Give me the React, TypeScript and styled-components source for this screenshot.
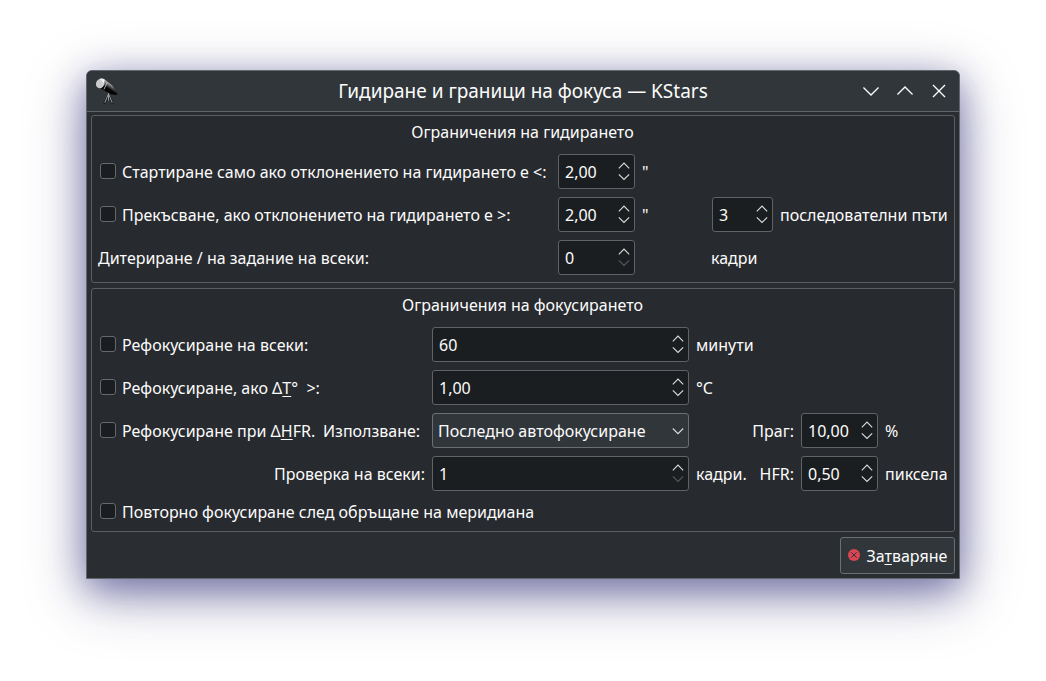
import React from "react";
import styled, { createGlobalStyle } from "styled-components";

const GlobalStyle = createGlobalStyle`
  * { box-sizing: border-box; }
  body {
    margin: 0;
    background: #fff;
    font: 16px/22px "Noto Sans", sans-serif;
    color: #fcfcfc;
    overflow: hidden;
  }
`;

const Desktop = styled.main`
  height: 681px;
  padding: 70px 86px 0;
`;

const Window = styled.section`
  width: 874px;
  height: 509px;
  display: flex;
  flex-direction: column;
  border: 1px solid #60686d;
  border-radius: 6px 6px 0 0;
  background: #2a2e32;
  box-shadow: 0 16px 60px rgba(33, 30, 95, 0.38), 0 10px 34px rgba(33, 32, 125, 0.44);
`;

const TitleBar = styled.header`
  height: 41px;
  display: grid;
  grid-template-columns: 90px 1fr 90px;
  align-items: center;
  padding: 0 12px 0 6px;
  border-bottom: 1px solid #60676b;
  border-radius: 5px 5px 0 0;
  background: #31363b;
`;

const Title = styled.h1`
  margin: 0;
  padding-left: 6px;
  text-align: center;
  font-size: 19px;
  font-weight: 400;
  line-height: 26px;
  white-space: nowrap;
`;

const WindowButtons = styled.div`
  display: flex;
  gap: 18px;
  justify-content: flex-end;
`;

const Body = styled.div`
  flex: 1;
  display: flex;
  flex-direction: column;
  gap: 5px;
  padding: 3px 4px 4px;
`;

const Group = styled.fieldset<{ $height: number }>`
  height: ${(p) => p.$height}px;
  margin: 0;
  padding: 5px 5px 0;
  min-width: 0;
  border: 1px solid #5b5f62;
  border-radius: 3px;
  background: #272a2e;
  display: flex;
  flex-direction: column;
`;

const GroupTitle = styled.div`
  height: 22px;
  margin-bottom: 11px;
  padding-right: 1px;
  text-align: center;
`;

const Row = styled.div<{ $height?: number }>`
  height: ${(p) => p.$height ?? 35}px;
  margin-bottom: 8px;
  display: flex;
  align-items: center;
  white-space: pre;
`;

const Label = styled.label<{ $width?: number; $indent?: number; $align?: string }>`
  width: ${(p) => (p.$width ? p.$width + "px" : "auto")};
  flex: none;
  display: flex;
  align-items: center;
  justify-content: ${(p) => p.$align ?? "flex-start"};
  padding-left: ${(p) => p.$indent ?? 0}px;
  white-space: pre;
`;

const CheckBox = styled.span`
  width: 16px;
  height: 16px;
  flex: none;
  margin: 0 6px 1px 3px;
  border: 1px solid #65696c;
  border-radius: 3px;
  background: #1b1e20;
`;

const Mnemonic = styled.span`
  text-decoration: underline;
  text-decoration-thickness: 1px;
  text-underline-offset: 2px;
  text-decoration-skip-ink: none;
`;

const Field = styled.div<{ $width: number; $raised?: boolean }>`
  width: ${(p) => p.$width}px;
  height: 35px;
  flex: none;
  display: flex;
  align-items: center;
  justify-content: space-between;
  padding: 0 2px 0 ${(p) => (p.$raised ? 5 : 6)}px;
  border: 1px solid ${(p) => (p.$raised ? "#6b6f73" : "#5f6366")};
  border-radius: 3px;
  background: ${(p) => (p.$raised ? "#31363b" : "#1b1e20")};
`;

const Footer = styled.footer`
  display: flex;
  justify-content: flex-end;
`;

const CloseButton = styled.button`
  width: 115px;
  height: 37px;
  display: flex;
  align-items: center;
  gap: 6.5px;
  padding: 0 0 0 7px;
  border: 1px solid #6b6f73;
  border-radius: 3px;
  background: #31363b;
  color: inherit;
  font: inherit;
`;

const CloseIcon = styled.svg`
  margin-bottom: 2px;
`;

function Arrows({ atMinimum }: { atMinimum?: boolean }) {
  return (
    <svg width="16" height="33" viewBox="0 0 16 33" fill="none" stroke="#dcdddd" strokeWidth="1.1">
      <path d="M2.8 13.3 8 8.1l5.2 5.2" />
      <path d="M2.8 19.3 8 24.5l5.2-5.2" stroke={atMinimum ? "#56595b" : undefined} />
    </svg>
  );
}

function Spin({ value, width, atMinimum }: { value: string; width: number; atMinimum?: boolean }) {
  return (
    <Field $width={width}>
      <span>{value}</span>
      <Arrows atMinimum={atMinimum} />
    </Field>
  );
}

function Telescope() {
  return (
    <svg width="26" height="28" viewBox="0 0 26 28">
      <defs>
        <linearGradient id="tube" gradientUnits="userSpaceOnUse" x1="17" y1="6" x2="12" y2="14">
          <stop offset="0" stopColor="#c4c6c6" />
          <stop offset="0.35" stopColor="#4a4a4a" />
          <stop offset="0.6" stopColor="#050505" />
        </linearGradient>
      </defs>
      <path d="m15.5 18-4.3 9M15.5 18l4.5 9" stroke="#1c2023" strokeWidth="2.4" fill="none" />
      <path d="m15.2 17.5-3.4 8.2M15.8 17.5l3.4 8.2M15.5 16v7.5" stroke="#a6a9ab" strokeWidth="0.9" fill="none" />
      <path d="m11 2 8.5 6.8 3 5.2 2.2 2.8-.8 1.2-5.4-.6L7.5 11.5z" fill="url(#tube)" />
      <ellipse cx="7.3" cy="6.4" rx="4.2" ry="5" transform="rotate(28 7.3 6.4)" fill="#c9cbca" />
      <path d="M7 1.9c2.8-1 4.5 0 4.6 1.4L8.4 11C10.6 8.500 10.500 4 7 1.900" fill="#f0f1f1" />
      <path d="M14 5.800 11 12.300" stroke="#d0d2d2" strokeWidth="0.800" />
    </svg>
  );
}

export default function App() {
  return (
    <Desktop>
      <GlobalStyle />
      <Window>
        <TitleBar>
          <Telescope />
          <Title>Гидиране и граници на фокуса — KStars</Title>
          <WindowButtons>
            <svg width="16" height="16" fill="none" stroke="#fcfcfc" strokeWidth="1.4">
              <path d="m.4 4.5 7.6 7.6 7.6-7.6" />
            </svg>
            <svg width="16" height="16" fill="none" stroke="#fcfcfc" strokeWidth="1.4">
              <path d="m.4 11.5 7.6-7.6 7.6 7.6" />
            </svg>
            <svg width="16" height="16" fill="none" stroke="#fcfcfc" strokeWidth="1.4">
              <path d="m2 2 12 12M14 2 2 14" />
            </svg>
          </WindowButtons>
        </TitleBar>
        <Body>
          <Group $height={168}>
            <GroupTitle>Ограничения на гидирането</GroupTitle>
            <Row>
              <Label $width={461}><CheckBox />Стартиране само ако отклонението на гидирането е &lt;:</Label>
              <Spin value="2,00" width={77} />
              <Label $indent={7}>"</Label>
            </Row>
            <Row>
              <Label $width={461}><CheckBox />Прекъсване, ако отклонението на гидирането е &gt;:</Label>
              <Spin value="2,00" width={77} />
              <Label $width={77} $indent={7}>"</Label>
              <Spin value="3" width={61} />
              <Label $indent={7}>последователни пъти</Label>
            </Row>
            <Row>
              <Label $width={461} $indent={1}>Дитериране / на задание на всеки:</Label>
              <Spin value="0" width={77} atMinimum />
              <Label $indent={76}>кадри</Label>
            </Row>
          </Group>
          <Group $height={244}>
            <GroupTitle>Ограничения на фокусирането</GroupTitle>
            <Row>
              <Label $width={335}><CheckBox />Рефокусиране на всеки:</Label>
              <Spin value="60" width={257} />
              <Label $indent={7}>минути</Label>
            </Row>
            <Row>
              <Label $width={335}>
                <CheckBox /><span>Рефокусиране, ако Δ<Mnemonic>T</Mnemonic>°{"  "}&gt;:</span>
              </Label>
              <Spin value="1,00" width={257} />
              <Label $indent={7}>°C</Label>
            </Row>
            <Row>
              <Label $width={226}>
                <CheckBox /><span>Рефокусиране при Δ<Mnemonic>H</Mnemonic>FR.</span>
              </Label>
              <Label $width={109}>Използване:</Label>
              <Field $width={257} $raised>
                <span>Последно автофокусиране</span>
                <svg width="16" height="16" fill="none" stroke="#dcdddd" strokeWidth="1.1">
                  <path d="m2.8 5.5 5.2 5.2 5.2-5.2" />
                </svg>
              </Field>
              <Label $width={105} $align="flex-end">Праг:</Label>
              <Label $width={7} />
              <Spin value="10,00" width={77} />
              <Label $indent={7}>%</Label>
            </Row>
            <Row>
              <Label $width={328} $align="flex-end">Проверка на всеки:</Label>
              <Label $width={7} />
              <Spin value="1" width={257} atMinimum />
              <Label $width={63} $indent={7}>кадри.</Label>
              <Label $width={42} $align="flex-end">HFR:</Label>
              <Label $width={7} />
              <Spin value="0,50" width={77} />
              <Label $indent={7}>пиксела</Label>
            </Row>
            <Row $height={25}>
              <Label><CheckBox />Повторно фокусиране след обръщане на меридиана</Label>
            </Row>
          </Group>
          <Footer>
            <CloseButton>
              <CloseIcon width="12" height="12" viewBox="0 0 12 12">
                <circle cx="6" cy="6" r="6" fill="#da4453" />
                <path d="m3.3 3.3 5.4 5.4m0-5.4L3.3 8.7" stroke="#31363b" strokeWidth="1" />
              </CloseIcon>
              <span>За<Mnemonic>т</Mnemonic>варяне</span>
            </CloseButton>
          </Footer>
        </Body>
      </Window>
    </Desktop>
  );
}
